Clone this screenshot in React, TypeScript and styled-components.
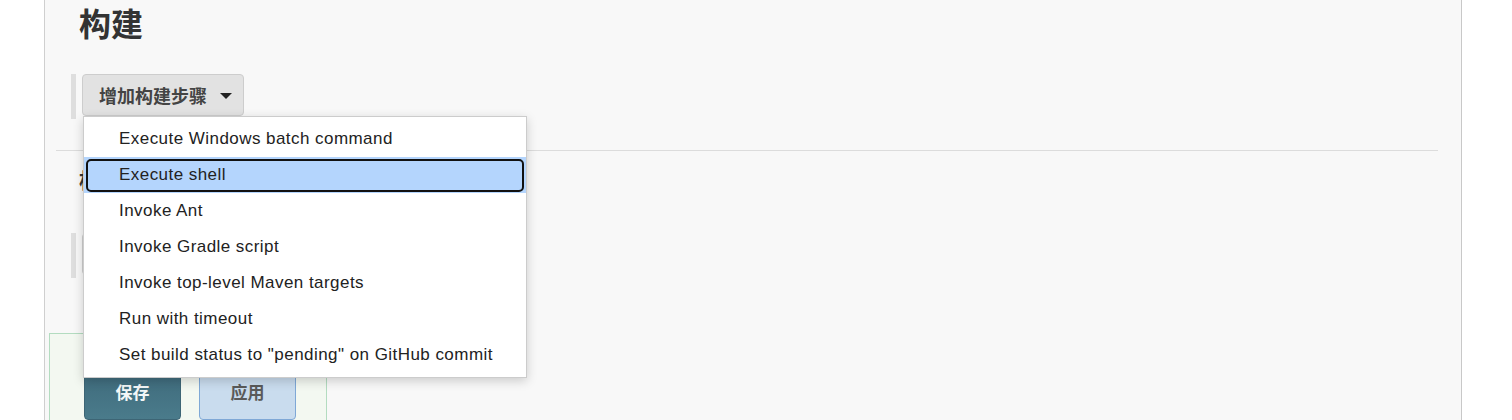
import React from "react";
import styled, { createGlobalStyle } from "styled-components";

const GlobalStyle = createGlobalStyle`
  html, body { margin: 0; padding: 0; background: #ffffff; }
  body {
    font-family: "Liberation Sans", "Noto Sans CJK SC", Arial, sans-serif;
    color: #333;
    overflow: hidden;
  }
`;

const Page = styled.div`
  height: 420px;
  overflow: hidden;
`;

const Panel = styled.div`
  margin-left: 44px;
  width: 1416px;
  min-height: 420px;
  background: #f8f8f8;
  border-left: 1px solid #cfcfcf;
  border-right: 1px solid #c8c8c8;
  display: flex;
  flex-direction: column;
`;

const Section = styled.section`
  padding-left: 26px;
  display: flex;
  flex-direction: column;
`;

const Title = styled.h2`
  margin: 0 0 0 8px;
  padding-top: 3px;
  font-family: "Noto Sans CJK SC", "Liberation Sans", sans-serif;
  font-size: 32px;
  line-height: 38px;
  font-weight: 700;
  color: #333;
`;

const SubTitle = styled.h3`
  margin: 14px 0 0 8px;
  font-family: "Noto Sans CJK SC", "Liberation Sans", sans-serif;
  font-size: 21px;
  line-height: 28px;
  font-weight: 700;
  color: #333;
`;

const StepRow = styled.div<{ $top: number }>`
  position: relative;
  margin-top: ${(p) => p.$top}px;
  display: flex;
  align-items: flex-start;
  gap: 6px;
  height: 45px;
`;

const Bar = styled.div`
  width: 5px;
  height: 45px;
  background: #dedede;
`;

const AddButton = styled.button`
  position: relative;
  display: flex;
  align-items: center;
  gap: 13px;
  height: 42px;
  padding: 0 11px 0 16px;
  background: #e2e2e2;
  border: 1px solid #cdcdcd;
  border-radius: 4px;
  font-family: "Noto Sans CJK SC", "Liberation Sans", sans-serif;
  font-size: 18px;
  font-weight: 700;
  color: #444;
  cursor: pointer;
`;

const Caret = styled.span`
  width: 0;
  height: 0;
  border-left: 6px solid transparent;
  border-right: 6px solid transparent;
  border-top: 6px solid #222;
  margin-top: 2px;
`;

const Separator = styled.hr`
  margin: 31px 23px 0 11px;
  border: 0;
  border-top: 1px solid #dcdcdc;
  height: 0;
`;

const Menu = styled.ul`
  position: absolute;
  top: 42px;
  left: 12px;
  z-index: 10;
  width: 442px;
  margin: 0;
  padding: 4px 0;
  list-style: none;
  background: #ffffff;
  border: 1px solid #cccccc;
  box-shadow: 0 3px 10px rgba(0, 0, 0, 0.18);
`;

const MenuItem = styled.li<{ $active?: boolean }>`
  position: relative;
  height: 36px;
  display: flex;
  align-items: center;
  padding-left: 35px;
  font-family: "Liberation Sans", Arial, sans-serif;
  font-size: 17px;
  letter-spacing: 0.45px;
  color: #222;
  white-space: nowrap;
  background: ${(p) => (p.$active ? "#b4d5fd" : "transparent")};
  ${(p) =>
    p.$active
      ? `&::after {
          content: "";
          position: absolute;
          inset: 2px 2px 1px 2px;
          border: 2.5px solid #111;
          border-radius: 5px;
        }`
      : ""}
`;

const ItemText = styled.span`
  position: relative;
  z-index: 1;
`;

const BottomBar = styled.div`
  margin: 55px 0 0 4px;
  width: 278px;
  height: 120px;
  background: #f3f8f1;
  border: 1px solid #b3dcc0;
  padding: 38px 0 0 34px;
  box-sizing: border-box;
  display: flex;
  gap: 18px;
  align-items: flex-start;
`;

const ActionButton = styled.button<{ $primary?: boolean }>`
  width: 97px;
  height: 48px;
  padding-bottom: 10px;
  border-radius: 4px;
  font-family: "Noto Sans CJK SC", "Liberation Sans", sans-serif;
  font-size: 17px;
  font-weight: 700;
  cursor: pointer;
  border: 1px solid ${(p) => (p.$primary ? "#3d6575" : "#7fa8d6")};
  background: ${(p) =>
    p.$primary ? "linear-gradient(#3f6b7c, #4a7b8b)" : "#c9dcee"};
  color: ${(p) => (p.$primary ? "#f4f7f8" : "#5a5a5a")};
`;

const items = [
  "Execute Windows batch command",
  "Execute shell",
  "Invoke Ant",
  "Invoke Gradle script",
  "Invoke top-level Maven targets",
  "Run with timeout",
  'Set build status to "pending" on GitHub commit',
];

export default function App() {
  return (
    <Page>
      <GlobalStyle />
      <Panel>
        <Section>
          <Title>构建</Title>
          <StepRow $top={33}>
            <Bar />
            <AddButton>
              增加构建步骤
              <Caret />
            </AddButton>
            <Menu>
              {items.map((t, i) => (
                <MenuItem key={t} $active={i === 1}>
                  <ItemText>{t}</ItemText>
                </MenuItem>
              ))}
            </Menu>
          </StepRow>
        </Section>
        <Separator />
        <Section>
          <SubTitle>构建后操作</SubTitle>
          <StepRow $top={40}>
            <Bar />
            <AddButton>
              增加构建后操作步骤
              <Caret />
            </AddButton>
          </StepRow>
        </Section>
        <BottomBar>
          <ActionButton $primary>保存</ActionButton>
          <ActionButton>应用</ActionButton>
        </BottomBar>
      </Panel>
    </Page>
  );
}
